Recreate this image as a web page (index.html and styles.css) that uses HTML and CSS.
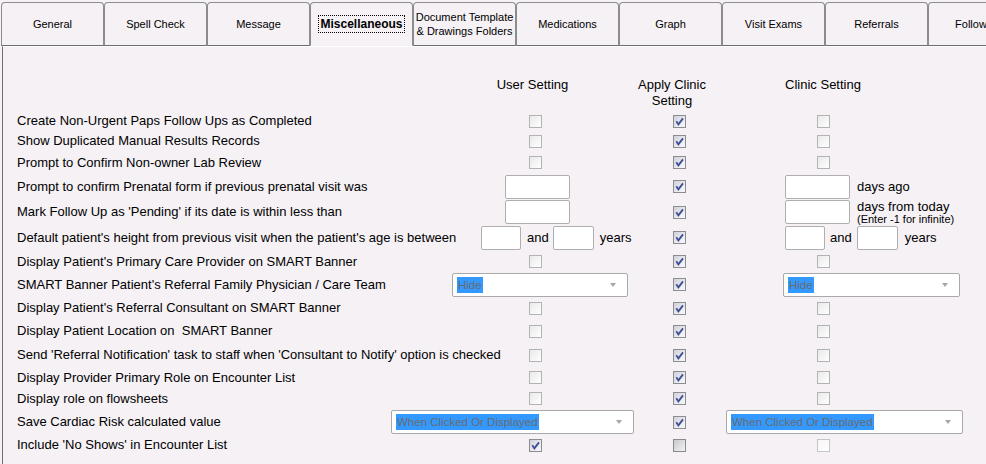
FILE: index.html
```html
<!DOCTYPE html>
<html>
<head>
<meta charset="utf-8">
<link rel="stylesheet" href="styles.css">
</head>
<body>
<div class="tabs">
  <div class="tab"><span>General</span></div>
  <div class="tab"><span>Spell Check</span></div>
  <div class="tab"><span>Message</span></div>
  <div class="tab active"><span class="focus">Miscellaneous</span></div>
  <div class="tab"><span>Document Template<br>&amp; Drawings Folders</span></div>
  <div class="tab"><span>Medications</span></div>
  <div class="tab"><span>Graph</span></div>
  <div class="tab"><span>Visit Exams</span></div>
  <div class="tab"><span>Referrals</span></div>
  <div class="tab"><span>Follow Up</span></div>
</div>

<div class="panel">
  <div class="grid head">
    <div></div>
    <div class="h-user">User Setting</div>
    <div class="h-apply">Apply Clinic<br>Setting</div>
    <div class="h-clinic">Clinic Setting</div>
  </div>

  <div class="grid row h20">
    <div class="label">Create Non-Urgent Paps Follow Ups as Completed</div>
    <div class="cell user"><span class="cb"></span></div>
    <div class="cell apply"><span class="cb on"><svg viewBox="0 0 11 11"><path d="M2.3 5.2 L4.4 8.4 L9 2.4"/></svg></span></div>
    <div class="cell clinic"><span class="cb"></span></div>
  </div>

  <div class="grid row h20">
    <div class="label">Show Duplicated Manual Results Records</div>
    <div class="cell user"><span class="cb"></span></div>
    <div class="cell apply"><span class="cb on"><svg viewBox="0 0 11 11"><path d="M2.3 5.2 L4.4 8.4 L9 2.4"/></svg></span></div>
    <div class="cell clinic"><span class="cb"></span></div>
  </div>

  <div class="grid row h23">
    <div class="label">Prompt to Confirm Non-owner Lab Review</div>
    <div class="cell user"><span class="cb"></span></div>
    <div class="cell apply"><span class="cb on"><svg viewBox="0 0 11 11"><path d="M2.3 5.2 L4.4 8.4 L9 2.4"/></svg></span></div>
    <div class="cell clinic"><span class="cb"></span></div>
  </div>

  <div class="grid row h25">
    <div class="label">Prompt to confirm Prenatal form if previous prenatal visit was</div>
    <div class="cell user inp"><span class="box wide"></span></div>
    <div class="cell apply"><span class="cb on"><svg viewBox="0 0 11 11"><path d="M2.3 5.2 L4.4 8.4 L9 2.4"/></svg></span></div>
    <div class="cell clinic inp"><span class="box wide"></span><span class="unit">days ago</span></div>
  </div>

  <div class="grid row h25">
    <div class="label">Mark Follow Up as 'Pending' if its date is within less than</div>
    <div class="cell user inp"><span class="box wide"></span></div>
    <div class="cell apply"><span class="cb on"><svg viewBox="0 0 11 11"><path d="M2.3 5.2 L4.4 8.4 L9 2.4"/></svg></span></div>
    <div class="cell clinic inp"><span class="box wide"></span><span class="unit stack"><span>days from today</span><small>(Enter -1 for infinite)</small></span></div>
  </div>

  <div class="grid row h27">
    <div class="label">Default patient's height from previous visit when the patient's age is between</div>
    <div class="cell user pair"><span class="box a"></span><span class="and">and</span><span class="box b"></span><span class="yrs">years</span></div>
    <div class="cell apply"><span class="cb on"><svg viewBox="0 0 11 11"><path d="M2.3 5.2 L4.4 8.4 L9 2.4"/></svg></span></div>
    <div class="cell clinic pair"><span class="box a"></span><span class="and c">and</span><span class="box b"></span><span class="yrs c">years</span></div>
  </div>

  <div class="grid row h21">
    <div class="label">Display Patient's Primary Care Provider on SMART Banner</div>
    <div class="cell user"><span class="cb"></span></div>
    <div class="cell apply"><span class="cb on"><svg viewBox="0 0 11 11"><path d="M2.3 5.2 L4.4 8.4 L9 2.4"/></svg></span></div>
    <div class="cell clinic"><span class="cb"></span></div>
  </div>

  <div class="grid row h25">
    <div class="label">SMART Banner Patient's Referral Family Physician / Care Team</div>
    <div class="cell user sel"><span class="drop hide-u"><span class="hl">Hide</span><span class="arrow"></span></span></div>
    <div class="cell apply"><span class="cb on"><svg viewBox="0 0 11 11"><path d="M2.3 5.2 L4.4 8.4 L9 2.4"/></svg></span></div>
    <div class="cell clinic sel"><span class="drop hide-c"><span class="hl">Hide</span><span class="arrow"></span></span></div>
  </div>

  <div class="grid row h22">
    <div class="label">Display Patient's Referral Consultant on SMART Banner</div>
    <div class="cell user"><span class="cb"></span></div>
    <div class="cell apply"><span class="cb on"><svg viewBox="0 0 11 11"><path d="M2.3 5.2 L4.4 8.4 L9 2.4"/></svg></span></div>
    <div class="cell clinic"><span class="cb"></span></div>
  </div>

  <div class="grid row h24">
    <div class="label pre">Display Patient Location on  SMART Banner</div>
    <div class="cell user"><span class="cb"></span></div>
    <div class="cell apply"><span class="cb on"><svg viewBox="0 0 11 11"><path d="M2.3 5.2 L4.4 8.4 L9 2.4"/></svg></span></div>
    <div class="cell clinic"><span class="cb"></span></div>
  </div>

  <div class="grid row h24">
    <div class="label">Send 'Referral Notification' task to staff when 'Consultant to Notify' option is checked</div>
    <div class="cell user"><span class="cb"></span></div>
    <div class="cell apply"><span class="cb on"><svg viewBox="0 0 11 11"><path d="M2.3 5.2 L4.4 8.4 L9 2.4"/></svg></span></div>
    <div class="cell clinic"><span class="cb"></span></div>
  </div>

  <div class="grid row h21">
    <div class="label">Display Provider Primary Role on Encounter List</div>
    <div class="cell user"><span class="cb"></span></div>
    <div class="cell apply"><span class="cb on"><svg viewBox="0 0 11 11"><path d="M2.3 5.2 L4.4 8.4 L9 2.4"/></svg></span></div>
    <div class="cell clinic"><span class="cb"></span></div>
  </div>

  <div class="grid row h21">
    <div class="label">Display role on flowsheets</div>
    <div class="cell user"><span class="cb"></span></div>
    <div class="cell apply"><span class="cb on"><svg viewBox="0 0 11 11"><path d="M2.3 5.2 L4.4 8.4 L9 2.4"/></svg></span></div>
    <div class="cell clinic"><span class="cb"></span></div>
  </div>

  <div class="grid row h26">
    <div class="label">Save Cardiac Risk calculated value</div>
    <div class="cell user sel"><span class="drop save-u"><span class="hl">When Clicked Or Displayed</span><span class="arrow"></span></span></div>
    <div class="cell apply"><span class="cb on"><svg viewBox="0 0 11 11"><path d="M2.3 5.2 L4.4 8.4 L9 2.4"/></svg></span></div>
    <div class="cell clinic sel"><span class="drop save-c"><span class="hl">When Clicked Or Displayed</span><span class="arrow"></span></span></div>
  </div>

  <div class="grid row h20">
    <div class="label">Include 'No Shows' in Encounter List</div>
    <div class="cell user"><span class="cb on en"><svg viewBox="0 0 11 11"><path d="M2.3 5.2 L4.4 8.4 L9 2.4"/></svg></span></div>
    <div class="cell apply"><span class="cb en-off"></span></div>
    <div class="cell clinic"><span class="cb light"></span></div>
  </div>
</div>
</body>
</html>
```

FILE: styles.css
```css
html, body {
  margin: 0;
  padding: 0;
}
body {
  width: 986px;
  height: 464px;
  overflow: hidden;
  background: #f5f1f5;
  font-family: "Liberation Sans", Arial, sans-serif;
  font-size: 13px;
  color: #000;
}

/* Tabs */
.tabs {
  display: flex;
  padding: 2px 0 0 1px;
  height: 46px;
  box-sizing: border-box;
  overflow: hidden;
}
.tab {
  flex: 0 0 103px;
  height: 44px;
  box-sizing: border-box;
  border: 1px solid #8c8c8c;
  border-bottom-color: #6e6e6e;
  border-radius: 4px 4px 0 0;
  background: #f5f1f5;
  display: flex;
  align-items: center;
  justify-content: center;
  text-align: center;
  font-size: 11px;
  line-height: 14px;
}
.tab.active {
  border-bottom-color: #f5f1f5;
}
.focus {
  font-weight: bold;
  font-size: 12px;
  line-height: 14px;
  outline: 1px dotted #000;
  outline-offset: 1px;
  padding: 0;
}

/* Panel */
.panel {
  margin-left: 2px;
  border-left: 1px solid #6e6e6e;
  border-top: 1px solid #ffffff;
  height: 420px;
  box-sizing: border-box;
  padding: 30px 0 0 14px;
}
.grid {
  display: grid;
  grid-template-columns: 453px 130px 158px 130px;
}
.head {
  height: 32px;
  line-height: 16px;
  margin-bottom: 2px;
}
.h-user {
  text-align: center;
  padding-right: 5px;
}
.h-apply {
  text-align: center;
  padding-right: 14px;
}
.h-clinic {
  text-align: center;
}

.row { align-items: center; }
.h20 { height: 20px; }
.h21 { height: 21px; }
.h22 { height: 22px; }
.h23 { height: 23px; }
.h24 { height: 24px; }
.h25 { height: 25px; }
.h26 { height: 26px; }
.h27 { height: 27px; }

.label {
  white-space: nowrap;
  line-height: 16px;
}
.label.pre { white-space: pre; }

.cell {
  display: flex;
  align-items: center;
  height: 100%;
  white-space: nowrap;
}
.user { padding-left: 59px; }
.apply { padding-left: 73px; }
.clinic { padding-left: 59px; }
.user.inp { padding-left: 35px; }
.clinic.inp { padding-left: 27px; }
.user.pair { padding-left: 11px; }
.clinic.pair { padding-left: 27px; }
.user.sel, .clinic.sel { padding-left: 0; }

/* Checkboxes */
.cb {
  width: 13px;
  height: 13px;
  box-sizing: border-box;
  flex: 0 0 13px;
  border: 1px solid #b3b3b3;
  background: linear-gradient(135deg, #e9e9ea 0%, #ffffff 100%);
  display: block;
}
.cb svg {
  display: block;
  width: 11px;
  height: 11px;
}
.cb path {
  fill: none;
  stroke: #3f4f93;
  stroke-width: 1.8;
}
.cb.on {
  border-color: #8d8d8f;
  background: linear-gradient(135deg, #cfd0da 0%, #eeeef4 70%, #f8f8fb 100%);
}
.cb.en-off {
  border-color: #8a8a8a;
  background: linear-gradient(135deg, #c9c9cb 0%, #f3f3f4 100%);
}
.cb.light {
  border-color: #c6c6c6;
  background: linear-gradient(135deg, #f8f5f8 0%, #ffffff 100%);
}

/* Text boxes */
.box {
  display: block;
  height: 24px;
  box-sizing: border-box;
  border: 1px solid #afafaf;
  border-radius: 2px;
  background: #fff;
  flex: 0 0 auto;
}
.box.wide { width: 65px; }
.box.a { width: 40px; }
.box.b { width: 41px; }
.and { margin: 0 4px 0 6px; }
.and.c { margin: 0 5px 0 5px; }
.yrs { margin-left: 6px; }
.yrs.c { margin-left: 7px; }
.unit { margin-left: 7px; }
.stack {
  display: flex;
  flex-direction: column;
  line-height: 13px;
  padding-top: 1px;
}
.stack small {
  font-size: 11px;
  line-height: 12px;
}

/* Dropdowns */
.drop {
  display: flex;
  align-items: center;
  flex: 0 0 auto;
  height: 24px;
  box-sizing: border-box;
  border: 1px solid #a9a9a9;
  border-radius: 2px;
  background: #fff;
  padding-left: 4px;
}
.hide-u { width: 176px; margin-left: -18px; }
.hide-c { width: 177px; margin-left: 25px; }
.save-u { width: 243px; margin-left: -79px; }
.save-c { width: 237px; margin-left: -32px; }
.hl {
  background: #3399ff;
  color: #6b6b6b;
  font-size: 11.5px;
  line-height: 16px;
  padding: 0 1px;
}
.arrow {
  margin-left: auto;
  margin-right: 11px;
  width: 0;
  height: 0;
  border-left: 3.5px solid transparent;
  border-right: 3.5px solid transparent;
  border-top: 4px solid #a6a6a6;
}
```
